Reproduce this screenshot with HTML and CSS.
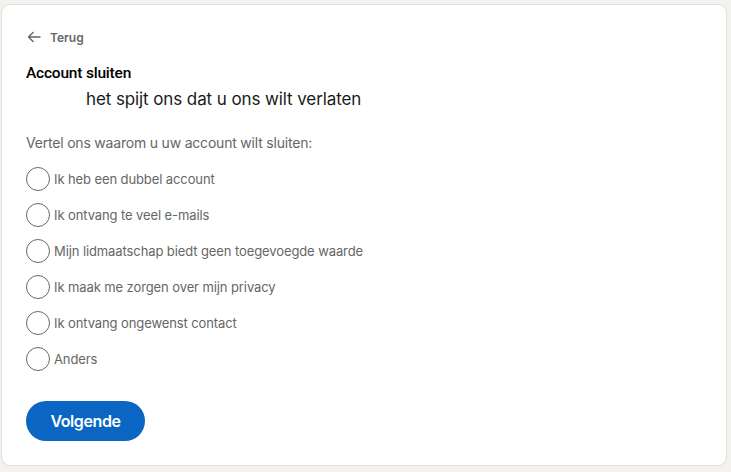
FILE: index.html
```html
<!DOCTYPE html>
<html lang="nl">
<head>
    <meta charset="UTF-8">
    <meta name="viewport" content="width=device-width, initial-scale=1.0">
    <title>Account sluiten</title>
    <link rel="stylesheet" href="styles.css">
</head>
<body>
    <div class="card">
        <!-- Back link -->
        <a class="back-link" href="#">
            <svg width="16" height="16" viewBox="0 0 16 16" fill="none" stroke="#666" stroke-width="1.4">
                <path d="M14.5 8H2.5M7.5 3L2.5 8l5 5" />
            </svg>
            <span>Terug</span>
        </a>

        <h1>Account sluiten</h1>
        <p class="subtitle">het spijt ons dat u ons wilt verlaten</p>

        <form id="close-form">
            <p class="question">Vertel ons waarom u uw account wilt sluiten:</p>
            <div class="options">
                <label class="option"><input type="radio" name="reason" value="dubbel"><span class="dot"></span>Ik heb een dubbel account</label>
                <label class="option"><input type="radio" name="reason" value="emails"><span class="dot"></span>Ik ontvang te veel e-mails</label>
                <label class="option"><input type="radio" name="reason" value="waarde"><span class="dot"></span>Mijn lidmaatschap biedt geen toegevoegde waarde</label>
                <label class="option"><input type="radio" name="reason" value="privacy"><span class="dot"></span>Ik maak me zorgen over mijn privacy</label>
                <label class="option"><input type="radio" name="reason" value="contact"><span class="dot"></span>Ik ontvang ongewenst contact</label>
                <label class="option"><input type="radio" name="reason" value="anders"><span class="dot"></span>Anders</label>
            </div>
            <button type="submit" class="next-btn">Volgende</button>
        </form>
    </div>
</body>
</html>
```

FILE: styles.css
```css
body {
    font-family: Inter, "Open Sans", Arial, sans-serif;
    margin: 0;
    padding: 5px 5px 7px 2px;
    background-color: #f4f2ee;
}

.card {
    background: white;
    border-radius: 8px;
    box-shadow: 0 0 0 1px rgba(0, 0, 0, 0.08);
    padding: 24px;
    height: 412px;
}

.back-link {
    display: inline-flex;
    align-items: center;
    gap: 8px;
    color: #666;
    font-size: 12px;
    font-weight: 600;
    text-decoration: none;
}

h1 {
    font-family: Roboto, Arial, sans-serif;
    font-size: 15.5px;
    font-weight: 500;
    letter-spacing: -0.2px;
    color: #000;
    margin: 13px 0 0 0;
    line-height: 22px;
}

.subtitle {
    font-size: 17px;
    letter-spacing: -0.1px;
    color: #1a1a1a;
    margin: 4px 0 0 60px;
    line-height: 22px;
}

.question {
    font-size: 14px;
    letter-spacing: -0.2px;
    color: #666;
    margin: 23px 0 0 0;
    line-height: 20px;
}

.options {
    display: flex;
    flex-direction: column;
    gap: 12px;
    margin-top: 14px;
}

.option {
    display: flex;
    align-items: center;
    gap: 4px;
    font-size: 13px;
    letter-spacing: -0.1px;
    color: #666;
    cursor: pointer;
}

.option input {
    display: none;
}

.dot {
    width: 22px;
    height: 22px;
    border: 1px solid #666;
    border-radius: 50%;
}

.next-btn {
    margin-top: 30px;
    background-color: #0a66c2;
    color: white;
    border: none;
    border-radius: 20px;
    font-family: inherit;
    font-size: 16px;
    font-weight: 600;
    letter-spacing: -0.4px;
    padding: 0;
    height: 40px;
    width: 119px;
    cursor: pointer;
}

.next-btn:hover {
    background-color: #004182;
}
```
